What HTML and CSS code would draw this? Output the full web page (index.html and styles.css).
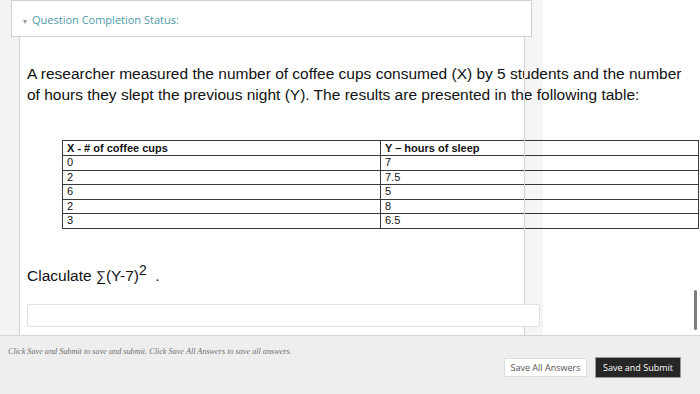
FILE: index.html
```html
<!DOCTYPE html>
<html lang="en">
<head>
    <meta charset="UTF-8">
    <meta name="viewport" content="width=device-width, initial-scale=1.0">
    <title>Question</title>
    <link rel="stylesheet" href="styles.css">
</head>
<body>
    <div class="screen">
        <div class="top">
            <div class="main">
                <div class="status"><span class="caret">&#9662;</span>Question Completion Status:</div>
                <div class="question">
                    <p class="prompt">A researcher measured the number of coffee cups consumed (X) by 5 students and the number<br>of hours they slept the previous night (Y). The results are presented in the following table:</p>
                    <table class="data">
                        <tr><th>X - # of coffee cups</th><th>Y &ndash; hours of sleep</th></tr>
                        <tr><td>0</td><td>7</td></tr>
                        <tr><td>2</td><td>7.5</td></tr>
                        <tr><td>6</td><td>5</td></tr>
                        <tr><td>2</td><td>8</td></tr>
                        <tr><td>3</td><td>6.5</td></tr>
                    </table>
                    <p class="task">Claculate <span class="sigma">&sum;</span>(Y-7)<sup>2</sup> &nbsp;.</p>
                    <div class="answer"></div>
                </div>
            </div>
            <div class="gutter"></div>
            <div class="thumb"></div>
        </div>
        <div class="footer">
            <p class="hint">Click Save and Submit to save and submit. Click Save All Answers to save all answers.</p>
            <div class="actions">
                <button class="btn">Save All Answers</button>
                <button class="btn btn-dark">Save and Submit</button>
            </div>
        </div>
    </div>
</body>
</html>
```
FILE: styles.css
```css
*{box-sizing:border-box;}
body{margin:0;background:#fff;font-family:'Liberation Sans', Arial, sans-serif;color:#111;}
.screen{display:flex;flex-direction:column;width:700px;height:394px;overflow:hidden;}
.top{position:relative;display:flex;height:335px;}
.main{display:flex;flex-direction:column;width:524px;background:#f3f3f3;}

/* status bar */
.status{position:relative;z-index:2;width:521px;height:37px;margin-left:11px;padding:11px 0 0 11px;border:1px solid #d0d0d0;background:#fff;color:#4f9aab;font-family:'Open Sans', sans-serif;font-size:11px;line-height:16px;}
.caret{display:inline-block;width:9px;color:#999;font-size:8px;}

/* question body */
.question{flex:1;margin-left:19px;padding:0 0 0 7px;border-left:1px solid #d0d0d0;background:#fff;}
.prompt{margin:26px 0 0;font-size:15.5px;line-height:21px;white-space:nowrap;}
.data{width:637px;margin:35px 0 0 35px;border-collapse:collapse;font-size:11px;line-height:13.5px;}
.data th, .data td{width:50%;padding:0 4px;border:1px solid #3a3a3a;text-align:left;}
.data th{font-weight:bold;line-height:14px;}
.task{margin:36px 0 0;font-size:15.5px;line-height:21px;}
.sigma{font-size:14px;}
.task sup{font-size:14px;line-height:0;vertical-align:6px;}
.answer{position:relative;z-index:2;width:513px;height:23px;margin-top:17px;border:1px solid #e0e0e0;border-radius:2px;background:#fff;}

/* overlays */
.gutter{position:absolute;top:0;left:524px;z-index:1;width:19px;height:335px;border-left:1px solid #d3d3d3;background:rgba(0,0,0,.04);}
.thumb{position:absolute;top:290px;left:694px;width:3px;height:40px;border-radius:2px;background:#7d7d7d;}

/* footer */
.footer{flex:1;padding:11px 19px 0 8px;border-top:1px solid #d4d4d4;background:#eee;}
.hint{margin:0;color:#6f6f6f;font-family:'Liberation Serif', serif;font-size:8.2px;font-style:italic;line-height:10px;}
.actions{display:flex;justify-content:flex-end;align-items:center;gap:8px;height:21px;}
.btn{width:83px;height:19px;padding:0;border:1px solid #ddd;background:#fff;color:#555;font-family:'Open Sans', sans-serif;font-size:9px;}
.btn-dark{width:86px;height:21px;border-color:#999;background:#262626;color:#fff;}
```
